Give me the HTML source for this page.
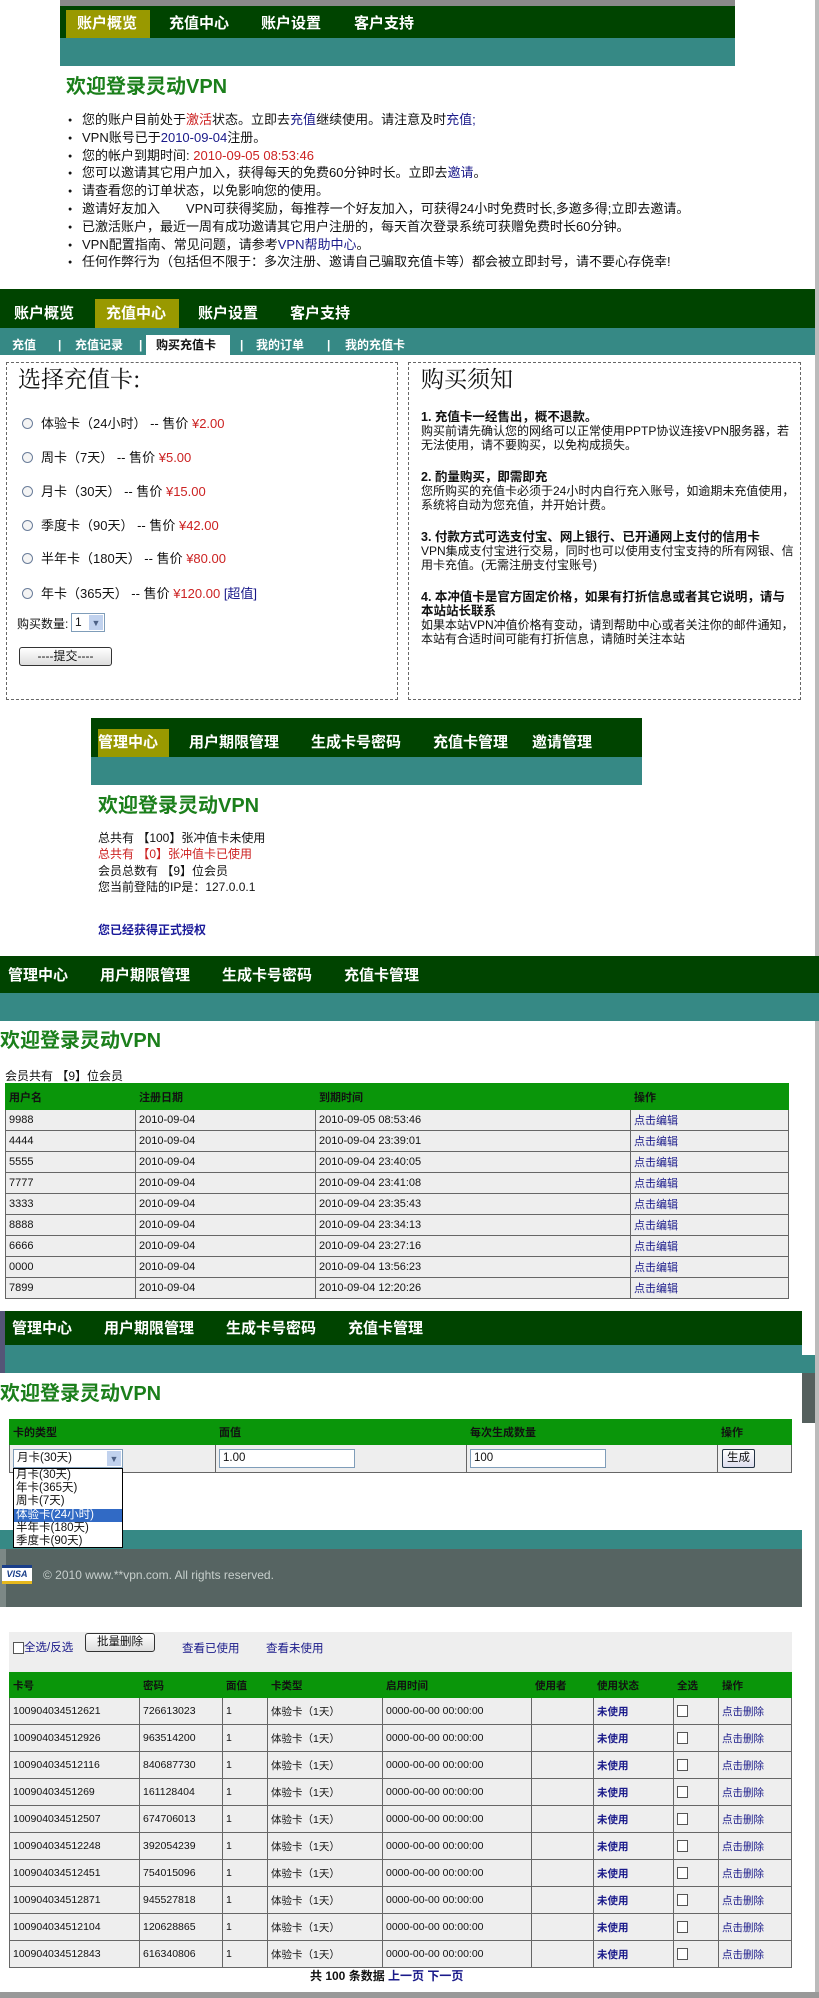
<!DOCTYPE html>
<html><head><meta charset="utf-8">
<style>
*{margin:0;padding:0;box-sizing:border-box}
body{width:819px;height:1998px;position:relative;background:#fff;font-family:"Liberation Sans","Noto Sans CJK SC",sans-serif;overflow:hidden;color:#111}
.a{position:absolute}
.nav{background:#004400}
.teal{background:#368985}
.nv{position:absolute;color:#fff;font-weight:bold;font-size:15px;line-height:28px;white-space:nowrap}
.act{background:#999900}
.title{position:absolute;color:#1b7f1b;font-weight:bold;font-size:20px;white-space:nowrap}
ul.b{position:absolute;left:68px;top:111px;list-style:none;font-size:13px;line-height:17.8px}
ul.b li:before{content:"●";font-size:7px;position:absolute;left:0;margin-top:1px}
ul.b li{padding-left:14px;white-space:nowrap}
.r{color:#cc2222}.bl{color:#1a1a8a}
.box{position:absolute;border:1px dashed #666}
.rad{position:absolute;left:22px;font-size:13px;white-space:nowrap}
.rad i{display:inline-block;width:11px;height:11px;border:1px solid #6a7d9a;border-radius:50%;vertical-align:-1px;margin-right:8px;background:#f4f4f4}
.rt{position:absolute;left:421px;font-size:12px;line-height:14px;width:375px}
.rt b{font-size:12.5px}
table{border-collapse:collapse;position:absolute;font-size:11px}
td,th{border:1px solid #666;text-align:left;padding:0 3px;white-space:nowrap;font-weight:normal}
th{background:#0a960a;color:#111;font-weight:bold;border-color:#0a960a}
td{background:#eeeeee}
.lk{color:#1a1a8a}
.cb{display:inline-block;width:11px;height:12px;border:1px solid #555;background:#fff;vertical-align:middle}
</style></head><body>
<div class="a" style="left:815px;top:0;width:4px;height:1998px;background:#bbb"></div>

<div class="a" style="left:60px;top:0;width:675px;height:6px;background:#8a8a8a"></div>
<div class="a nav" style="left:60px;top:6px;width:675px;height:32px"></div>
<div class="a teal" style="left:60px;top:38px;width:675px;height:28px"></div>
<div class="a act" style="left:66px;top:10px;width:84px;height:28px"></div>
<div class="nv" style="left:77px;top:10px">账户概览</div>
<div class="nv" style="left:169px;top:10px">充值中心</div>
<div class="nv" style="left:261px;top:10px">账户设置</div>
<div class="nv" style="left:354px;top:10px">客户支持</div>
<div class="title" style="left:66px;top:70px">欢迎登录灵动VPN</div>
<ul class="b">
<li>您的账户目前处于<span class="r">激活</span>状态。立即去<span class="bl">充值</span>继续使用。请注意及时<span class="bl">充值;</span></li>
<li>VPN账号已于<span class="bl">2010-09-04</span>注册。</li>
<li>您的帐户到期时间: <span class="r">2010-09-05 08:53:46</span></li>
<li>您可以邀请其它用户加入，获得每天的免费60分钟时长。立即去<span class="bl">邀请</span>。</li>
<li>请查看您的订单状态，以免影响您的使用。</li>
<li>邀请好友加入　　VPN可获得奖励，每推荐一个好友加入，可获得24小时免费时长,多邀多得;立即去邀请。</li>
<li>已激活账户，最近一周有成功邀请其它用户注册的，每天首次登录系统可获赠免费时长60分钟。</li>
<li>VPN配置指南、常见问题，请参考<span class="bl">VPN帮助中心</span>。</li>
<li>任何作弊行为（包括但不限于：多次注册、邀请自己骗取充值卡等）都会被立即封号，请不要心存侥幸!</li>
</ul>

<div class="a nav" style="left:0;top:289px;width:815px;height:39px"></div>
<div class="a teal" style="left:0;top:328px;width:815px;height:27px"></div>
<div class="a act" style="left:95px;top:299px;width:84px;height:29px"></div>
<div class="nv" style="left:14px;top:300px">账户概览</div>
<div class="nv" style="left:106px;top:300px">充值中心</div>
<div class="nv" style="left:198px;top:300px">账户设置</div>
<div class="nv" style="left:290px;top:300px">客户支持</div>
<div class="a" style="left:146px;top:335px;width:84px;height:20px;background:#fff"></div>
<div class="a" style="left:12px;top:335px;font-size:12px;font-weight:bold;color:#fff;line-height:20px;white-space:nowrap">充值 <span style="position:absolute;left:46px">|</span><span style="position:absolute;left:63px">充值记录</span><span style="position:absolute;left:127px">|</span><span style="position:absolute;left:144px;color:#111">购买充值卡</span><span style="position:absolute;left:228px">|</span><span style="position:absolute;left:244px">我的订单</span><span style="position:absolute;left:315px">|</span><span style="position:absolute;left:333px">我的充值卡</span></div>
<div class="box" style="left:6px;top:362px;width:392px;height:338px"></div>
<div class="box" style="left:408px;top:362px;width:393px;height:338px"></div>
<div class="a" style="left:18px;top:361px;font-size:23px;font-family:'Noto Serif CJK SC',serif;white-space:nowrap">选择充值卡:</div>
<div class="a" style="left:421px;top:361px;font-size:23px;font-family:'Noto Serif CJK SC',serif;white-space:nowrap">购买须知</div>
<div class="rad" style="top:413px"><i></i>体验卡（24小时） -- 售价 <span class="r">¥2.00</span></div>
<div class="rad" style="top:447px"><i></i>周卡（7天） -- 售价 <span class="r">¥5.00</span></div>
<div class="rad" style="top:481px"><i></i>月卡（30天） -- 售价 <span class="r">¥15.00</span></div>
<div class="rad" style="top:515px"><i></i>季度卡（90天） -- 售价 <span class="r">¥42.00</span></div>
<div class="rad" style="top:548px"><i></i>半年卡（180天） -- 售价 <span class="r">¥80.00</span></div>
<div class="rad" style="top:583px"><i></i>年卡（365天） -- 售价 <span class="r">¥120.00</span> <span class="bl">[超值]</span></div>
<div class="a" style="left:17px;top:615px;font-size:12px">购买数量:</div>
<div class="a" style="left:71px;top:613px;width:34px;height:19px;border:1px solid #7f9db9;background:#fff;font-size:12px;padding-left:3px;line-height:17px">1<span style="position:absolute;right:1px;top:1px;width:14px;height:15px;background:#c1d2ee;color:#4d6185;font-size:9px;text-align:center">▼</span></div>
<div class="a" style="left:19px;top:647px;width:93px;height:19px;border:1px solid #333;border-radius:3px;background:linear-gradient(#fff,#ddd);font-size:12px;text-align:center;line-height:17px">----提交----</div>
<div class="rt" style="top:410px"><b>1. 充值卡一经售出，概不退款。</b><br>购买前请先确认您的网络可以正常使用PPTP协议连接VPN服务器，若无法使用，请不要购买，以免构成损失。</div>
<div class="rt" style="top:470px"><b>2. 酌量购买，即需即充</b><br>您所购买的充值卡必须于24小时内自行充入账号，如逾期未充值使用，系统将自动为您充值，并开始计费。</div>
<div class="rt" style="top:530px"><b>3. 付款方式可选支付宝、网上银行、已开通网上支付的信用卡</b><br>VPN集成支付宝进行交易，同时也可以使用支付宝支持的所有网银、信用卡充值。(无需注册支付宝账号)</div>
<div class="rt" style="top:590px"><b>4. 本冲值卡是官方固定价格，如果有打折信息或者其它说明，请与本站站长联系</b><br>如果本站VPN冲值价格有变动，请到帮助中心或者关注你的邮件通知，本站有合适时间可能有打折信息，请随时关注本站</div>

<div class="a nav" style="left:91px;top:718px;width:551px;height:39px"></div>
<div class="a teal" style="left:91px;top:757px;width:551px;height:28px"></div>
<div class="a act" style="left:98px;top:729px;width:71px;height:28px"></div>
<div class="nv" style="left:98px;top:729px">管理中心</div>
<div class="nv" style="left:189px;top:729px">用户期限管理</div>
<div class="nv" style="left:311px;top:729px">生成卡号密码</div>
<div class="nv" style="left:433px;top:729px">充值卡管理</div>
<div class="nv" style="left:532px;top:729px">邀请管理</div>
<div class="title" style="left:98px;top:789px">欢迎登录灵动VPN</div>
<div class="a" style="left:98px;top:830px;font-size:12px;line-height:16.3px;white-space:nowrap">总共有 【100】张冲值卡未使用<br><span class="r">总共有 【0】张冲值卡已使用</span><br>会员总数有 【9】位会员<br>您当前登陆的IP是：127.0.0.1</div>
<div class="a" style="left:98px;top:921px;font-size:12px;font-weight:bold;color:#1a1a9a">您已经获得正式授权</div>

<div class="a nav" style="left:0;top:956px;width:819px;height:37px"></div>
<div class="a teal" style="left:0;top:993px;width:819px;height:28px"></div>
<div class="nv" style="left:8px;top:962px">管理中心</div>
<div class="nv" style="left:100px;top:962px">用户期限管理</div>
<div class="nv" style="left:222px;top:962px">生成卡号密码</div>
<div class="nv" style="left:344px;top:962px">充值卡管理</div>
<div class="title" style="left:0;top:1024px">欢迎登录灵动VPN</div>
<div class="a" style="left:5px;top:1067px;font-size:12px">会员共有 【9】位会员</div>
<table style="left:5px;top:1083px;width:784px">
<tr style="height:26px"><th style="width:130px">用户名</th><th style="width:180px">注册日期</th><th style="width:315px">到期时间</th><th>操作</th></tr>
<tr style="height:21px"><td>9988</td><td>2010-09-04</td><td>2010-09-05 08:53:46</td><td class="lk">点击编辑</td></tr>
<tr style="height:21px"><td>4444</td><td>2010-09-04</td><td>2010-09-04 23:39:01</td><td class="lk">点击编辑</td></tr>
<tr style="height:21px"><td>5555</td><td>2010-09-04</td><td>2010-09-04 23:40:05</td><td class="lk">点击编辑</td></tr>
<tr style="height:21px"><td>7777</td><td>2010-09-04</td><td>2010-09-04 23:41:08</td><td class="lk">点击编辑</td></tr>
<tr style="height:21px"><td>3333</td><td>2010-09-04</td><td>2010-09-04 23:35:43</td><td class="lk">点击编辑</td></tr>
<tr style="height:21px"><td>8888</td><td>2010-09-04</td><td>2010-09-04 23:34:13</td><td class="lk">点击编辑</td></tr>
<tr style="height:21px"><td>6666</td><td>2010-09-04</td><td>2010-09-04 23:27:16</td><td class="lk">点击编辑</td></tr>
<tr style="height:21px"><td>0000</td><td>2010-09-04</td><td>2010-09-04 13:56:23</td><td class="lk">点击编辑</td></tr>
<tr style="height:21px"><td>7899</td><td>2010-09-04</td><td>2010-09-04 12:20:26</td><td class="lk">点击编辑</td></tr>
</table>

<div class="a nav" style="left:0;top:1311px;width:802px;height:34px"></div>
<div class="a teal" style="left:0;top:1345px;width:802px;height:28px"></div>
<div class="a" style="left:0;top:1311px;width:5px;height:62px;background:#557"></div>
<div class="a teal" style="left:802px;top:1355px;width:13px;height:18px"></div>
<div class="a" style="left:802px;top:1373px;width:13px;height:50px;background:#55605e"></div>
<div class="nv" style="left:12px;top:1315px">管理中心</div>
<div class="nv" style="left:104px;top:1315px">用户期限管理</div>
<div class="nv" style="left:226px;top:1315px">生成卡号密码</div>
<div class="nv" style="left:348px;top:1315px">充值卡管理</div>
<div class="title" style="left:0;top:1377px">欢迎登录灵动VPN</div>
<table style="left:9px;top:1419px;width:783px">
<tr style="height:25px"><th style="width:206px">卡的类型</th><th style="width:251px">面值</th><th style="width:251px">每次生成数量</th><th>操作</th></tr>
<tr style="height:28px"><td></td><td></td><td></td><td></td></tr>
</table>
<div class="a" style="left:13px;top:1449px;width:110px;height:19px;border:1px solid #7f9db9;background:#fff;font-size:11.5px;padding-left:3px;line-height:17px">月卡(30天)<span style="position:absolute;right:1px;top:1px;width:14px;height:15px;background:#c1d2ee;color:#4d6185;font-size:9px;text-align:center">▼</span></div>
<div class="a" style="left:219px;top:1449px;width:136px;height:19px;border:1px solid #7f9db9;background:#fff;font-size:11.5px;padding-left:3px;line-height:17px">1.00</div>
<div class="a" style="left:470px;top:1449px;width:136px;height:19px;border:1px solid #7f9db9;background:#fff;font-size:11.5px;padding-left:3px;line-height:17px">100</div>
<div class="a" style="left:722px;top:1449px;width:33px;height:19px;border:1px solid #234;border-radius:2px;background:linear-gradient(#fff,#dde);font-size:11.5px;text-align:center;line-height:17px">生成</div>
<div class="a teal" style="left:0;top:1530px;width:802px;height:19px"></div>
<div class="a" style="left:0;top:1549px;width:802px;height:58px;background:#566462"></div>
<div class="a" style="left:0;top:1549px;width:6px;height:58px;background:#7c8886"></div>
<div class="a" style="left:2px;top:1565px;width:30px;height:19px;background:#fff;border-top:3px solid #1a3f8a;border-bottom:3px solid #e6b81e;font-size:9px;font-weight:bold;font-style:italic;color:#1a3f8a;text-align:center;line-height:13px">VISA</div>
<div class="a" style="left:43px;top:1568px;font-size:12px;color:#c7cfcc;white-space:nowrap">© 2010 www.**vpn.com. All rights reserved.</div>
<div class="a" style="left:13px;top:1468px;width:110px;height:80px;border:1px solid #000;background:#fff;font-size:11.5px;line-height:13.2px">
<div style="padding-left:2px">月卡(30天)</div><div style="padding-left:2px">年卡(365天)</div><div style="padding-left:2px">周卡(7天)</div><div style="padding-left:2px;background:#316ac5;color:#fff">体验卡(24小时)</div><div style="padding-left:2px">半年卡(180天)</div><div style="padding-left:2px">季度卡(90天)</div></div>

<div class="a" style="left:9px;top:1632px;width:783px;height:40px;background:#eeeeee"></div>
<div class="a" style="left:13px;top:1639px;font-size:11.5px;white-space:nowrap"><span class="cb"></span><span class="lk">全选/反选</span></div>
<div class="a" style="left:85px;top:1633px;width:70px;height:19px;border:1px solid #333;border-radius:3px;background:linear-gradient(#fff,#ddd);font-size:11.5px;text-align:center;line-height:17px">批量删除</div>
<div class="a lk" style="left:182px;top:1640px;font-size:11.5px">查看已使用</div>
<div class="a lk" style="left:266px;top:1640px;font-size:11.5px">查看未使用</div>
<table style="left:9px;top:1672px;width:783px;font-size:10.5px">
<tr style="height:25px"><th style="width:130px">卡号</th><th style="width:83px">密码</th><th style="width:45px">面值</th><th style="width:115px">卡类型</th><th style="width:149px">启用时间</th><th style="width:62px">使用者</th><th style="width:80px">使用状态</th><th style="width:45px">全选</th><th>操作</th></tr>
<tr style="height:27px"><td>100904034512621</td><td>726613023</td><td>1</td><td>体验卡（1天）</td><td>0000-00-00 00:00:00</td><td></td><td class="lk"><b>未使用</b></td><td><span class="cb"></span></td><td class="lk">点击删除</td></tr>
<tr style="height:27px"><td>100904034512926</td><td>963514200</td><td>1</td><td>体验卡（1天）</td><td>0000-00-00 00:00:00</td><td></td><td class="lk"><b>未使用</b></td><td><span class="cb"></span></td><td class="lk">点击删除</td></tr>
<tr style="height:27px"><td>100904034512116</td><td>840687730</td><td>1</td><td>体验卡（1天）</td><td>0000-00-00 00:00:00</td><td></td><td class="lk"><b>未使用</b></td><td><span class="cb"></span></td><td class="lk">点击删除</td></tr>
<tr style="height:27px"><td>10090403451269</td><td>161128404</td><td>1</td><td>体验卡（1天）</td><td>0000-00-00 00:00:00</td><td></td><td class="lk"><b>未使用</b></td><td><span class="cb"></span></td><td class="lk">点击删除</td></tr>
<tr style="height:27px"><td>100904034512507</td><td>674706013</td><td>1</td><td>体验卡（1天）</td><td>0000-00-00 00:00:00</td><td></td><td class="lk"><b>未使用</b></td><td><span class="cb"></span></td><td class="lk">点击删除</td></tr>
<tr style="height:27px"><td>100904034512248</td><td>392054239</td><td>1</td><td>体验卡（1天）</td><td>0000-00-00 00:00:00</td><td></td><td class="lk"><b>未使用</b></td><td><span class="cb"></span></td><td class="lk">点击删除</td></tr>
<tr style="height:27px"><td>100904034512451</td><td>754015096</td><td>1</td><td>体验卡（1天）</td><td>0000-00-00 00:00:00</td><td></td><td class="lk"><b>未使用</b></td><td><span class="cb"></span></td><td class="lk">点击删除</td></tr>
<tr style="height:27px"><td>100904034512871</td><td>945527818</td><td>1</td><td>体验卡（1天）</td><td>0000-00-00 00:00:00</td><td></td><td class="lk"><b>未使用</b></td><td><span class="cb"></span></td><td class="lk">点击删除</td></tr>
<tr style="height:27px"><td>100904034512104</td><td>120628865</td><td>1</td><td>体验卡（1天）</td><td>0000-00-00 00:00:00</td><td></td><td class="lk"><b>未使用</b></td><td><span class="cb"></span></td><td class="lk">点击删除</td></tr>
<tr style="height:27px"><td>100904034512843</td><td>616340806</td><td>1</td><td>体验卡（1天）</td><td>0000-00-00 00:00:00</td><td></td><td class="lk"><b>未使用</b></td><td><span class="cb"></span></td><td class="lk">点击删除</td></tr>
</table>
<div class="a" style="left:310px;top:1967px;font-size:12px;font-weight:bold;white-space:nowrap">共 100 条数据 <span class="lk">上一页</span> <span class="lk">下一页</span></div>
<div class="a" style="left:0;top:1992px;width:819px;height:6px;background:#999"></div>
</body></html>
